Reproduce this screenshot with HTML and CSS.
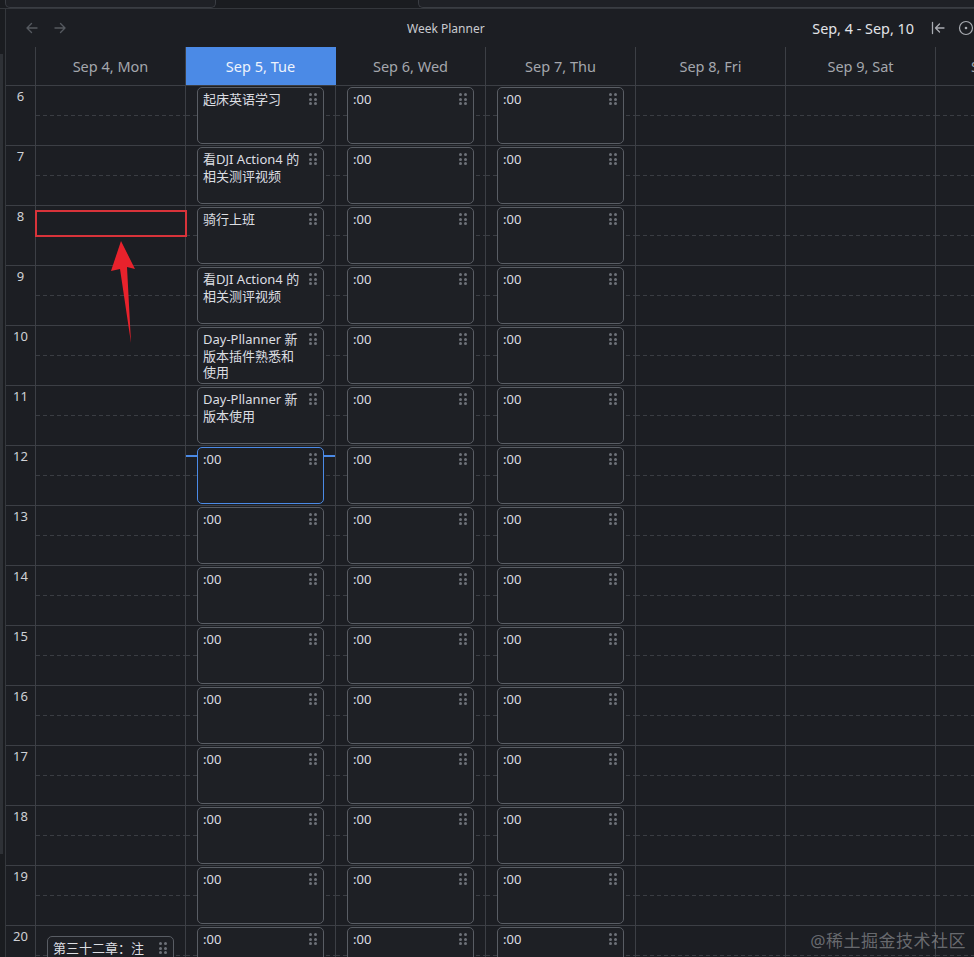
FILE: index.html
```html
<!DOCTYPE html>
<html lang="zh">
<head>
<meta charset="utf-8">
<title>Week Planner</title>
<link rel="stylesheet" href="styles.css">
</head>
<body>
<div class="tabs">
  <div class="tab tab-a"></div>
  <div class="tab tab-b"></div>
</div>
<div class="app">
  <div class="side"><div class="scroll"></div></div>
  <div class="main">
    <div class="toolbar">
      <div class="nav">
        <svg class="nav-ic" viewBox="0 0 14 14" width="14" height="14"><path d="M12 7H2M6.5 2.5 2 7l4.5 4.5" fill="none" stroke="currentColor" stroke-width="1.4" stroke-linecap="round" stroke-linejoin="round"/></svg>
        <svg class="nav-ic" viewBox="0 0 14 14" width="14" height="14"><path d="M2 7h10M7.5 2.5 12 7l-4.5 4.5" fill="none" stroke="currentColor" stroke-width="1.4" stroke-linecap="round" stroke-linejoin="round"/></svg>
      </div>
      <div class="title">Week Planner</div>
      <div class="range">Sep, 4 - Sep, 10</div>
      <svg class="tool-ic" viewBox="0 0 16 16" width="16" height="16"><path d="M2.5 2.5v11M14 8H5.5M9.5 4 5.5 8l4 4" fill="none" stroke="currentColor" stroke-width="1.3" stroke-linecap="round" stroke-linejoin="round"/></svg>
      <svg class="tool-ic last" viewBox="0 0 16 16" width="16" height="16"><circle cx="8" cy="8" r="6.5" fill="none" stroke="currentColor" stroke-width="1.2"/><circle cx="8" cy="8" r="1.3" fill="currentColor"/></svg>
    </div>
    <div class="grid">
      <div class="head-time"></div>
      <div class="head">Sep 4, Mon</div>
      <div class="head today">Sep 5, Tue</div>
      <div class="head">Sep 6, Wed</div>
      <div class="head">Sep 7, Thu</div>
      <div class="head">Sep 8, Fri</div>
      <div class="head">Sep 9, Sat</div>
      <div class="head">Sep 10, Sun</div>
    </div>
    <div class="grid body" id="body"></div>
  </div>
</div>

<div class="mark-box"></div>
<svg class="mark-arrow" viewBox="0 0 40 110" width="40" height="110">
  <polygon points="14,0 28,28 20,26 24,102 13,28 4,30" fill="#e8222c"/>
</svg>
<div class="watermark">@稀土掘金技术社区</div>

<script src="app.js"></script>
</body>
</html>
```

FILE: app.js
```js
(function () {
  var tue = {
    6: '起床英语学习',
    7: '看DJI Action4 的相关测评视频',
    8: '骑行上班',
    9: '看DJI Action4 的相关测评视频',
    10: 'Day-Pllanner 新版本插件熟悉和使用',
    11: 'Day-Pllanner 新版本使用'
  };
  function card(text, extra) {
    return '<div class="card' + (extra ? ' ' + extra : '') + '"><div class="card-text">' + text +
      '</div><div class="grip"><i></i><i></i><i></i><i></i><i></i><i></i></div></div>';
  }
  var html = '';
  for (var h = 6; h <= 20; h++) {
    html += '<div class="hour">' + h + '</div>';
    for (var d = 0; d < 7; d++) {
      var inner = '';
      if (d === 0 && h === 20) { inner = card('第三十二章：注', 'late'); }
      if (d === 1) {
        if (h === 12) { inner = '<div class="now"></div>' + card(':00', 'active'); }
        else { inner = card(tue[h] || ':00'); }
      }
      if (d === 2 || d === 3) { inner = card(':00'); }
      html += '<div class="cell">' + inner + '</div>';
    }
  }
  document.getElementById('body').innerHTML = html;
})();
```

FILE: styles.css
```css
html, body {
  margin: 0;
  padding: 0;
  height: 957px;
  overflow: hidden;
  background: #1c1e23;
  font-family: "Noto Sans", "Noto Sans CJK SC", sans-serif;
  color: #d6d8dc;
}

.tabs {
  height: 8px;
  border-bottom: 1px solid #34373c;
  background: #1a1c20;
  display: flex;
}
.tab {
  height: 7px;
  border: 1px solid #3a3d43;
  border-top: none;
  border-radius: 0 0 5px 5px;
  background: #1f2126;
}
.tab-a { margin-left: 5px; width: 209px; }
.tab-b { margin-left: 202px; flex: 1; border-right: none; border-radius: 0 0 0 5px; }

.app {
  display: flex;
  height: 948px;
}
.side {
  width: 5px;
  border-right: 1px solid #34373c;
  background: #1a1c20;
  padding-top: 45px;
}
.scroll {
  width: 3px;
  height: 800px;
  background: #2e3136;
}

.main {
  flex: 1;
  min-width: 0;
  overflow: hidden;
}

.toolbar {
  height: 38px;
  display: flex;
  align-items: center;
}
.nav {
  display: flex;
  gap: 14px;
  margin-left: 19px;
  color: #55595f;
}
.nav-ic { display: block; }
.title {
  margin-left: 340px;
  font-size: 12px;
  color: #c9cbd0;
}
.range {
  margin-left: auto;
  font-size: 14.4px;
  color: #e2e4e8;
}
.tool-ic {
  display: block;
  color: #a9acb2;
  margin-left: 16px;
}
.tool-ic.last { margin-left: 12px; margin-right: 0; }

.grid {
  display: grid;
  grid-template-columns: 30px repeat(7, 150px);
}
.head-time {
  border-right: 1px solid #3c3f45;
}
.head {
  height: 38px;
  border-right: 1px solid #3c3f45;
  display: flex;
  align-items: center;
  justify-content: center;
  font-size: 14.5px;
  color: #a4a7ad;
  white-space: nowrap;
}
.head.today {
  background: #4b8ae6;
  color: #eef3fc;
  border-right-color: #4b8ae6;
}

.body {
  grid-auto-rows: 60px;
}
.hour {
  border-top: 1px solid #3c3f45;
  border-right: 1px solid #3c3f45;
  text-align: center;
  font-size: 13px;
  color: #cfd1d5;
  padding-top: 2px;
  line-height: 16px;
}
.cell {
  position: relative;
  border-top: 1px solid #3c3f45;
  border-right: 1px solid #3c3f45;
  background: repeating-linear-gradient(to right, #3a3d43 0 4px, transparent 4px 7px) no-repeat 0 29px / 100% 1px;
  padding: 1px 11px 0 11px;
}

.card {
  position: relative;
  z-index: 1;
  height: 57px;
  box-sizing: border-box;
  border: 1px solid #595d64;
  border-radius: 5px;
  background: #1e2025;
  display: flex;
  padding: 3px 6px 0 5px;
}
.card.active { border-color: #4b8ae6; }
.card.late { margin-top: 9px; }
.card-text {
  width: 100px;
  font-size: 13px;
  line-height: 16.5px;
  color: #dcdee2;
}
.grip {
  margin-left: auto;
  margin-top: 2px;
  width: 8px;
  height: 12px;
  display: grid;
  grid-template-columns: 3px 3px;
  grid-auto-rows: 3px;
  column-gap: 2px;
  row-gap: 1.5px;
}
.grip i {
  display: block;
  background: #6e7279;
  border-radius: 50%;
}

.now {
  position: absolute;
  left: 0;
  right: 0;
  top: 9px;
  height: 2px;
  background: #4b8ae6;
}

.mark-box {
  position: absolute;
  left: 35px;
  top: 210px;
  width: 148px;
  height: 23px;
  border: 2px solid #d8333a;
}
.mark-arrow {
  position: absolute;
  left: 107px;
  top: 241px;
}

.watermark {
  position: absolute;
  right: 8px;
  top: 927px;
  font-size: 17px;
  color: rgba(200, 202, 206, 0.45);
  letter-spacing: 0.5px;
}
```
